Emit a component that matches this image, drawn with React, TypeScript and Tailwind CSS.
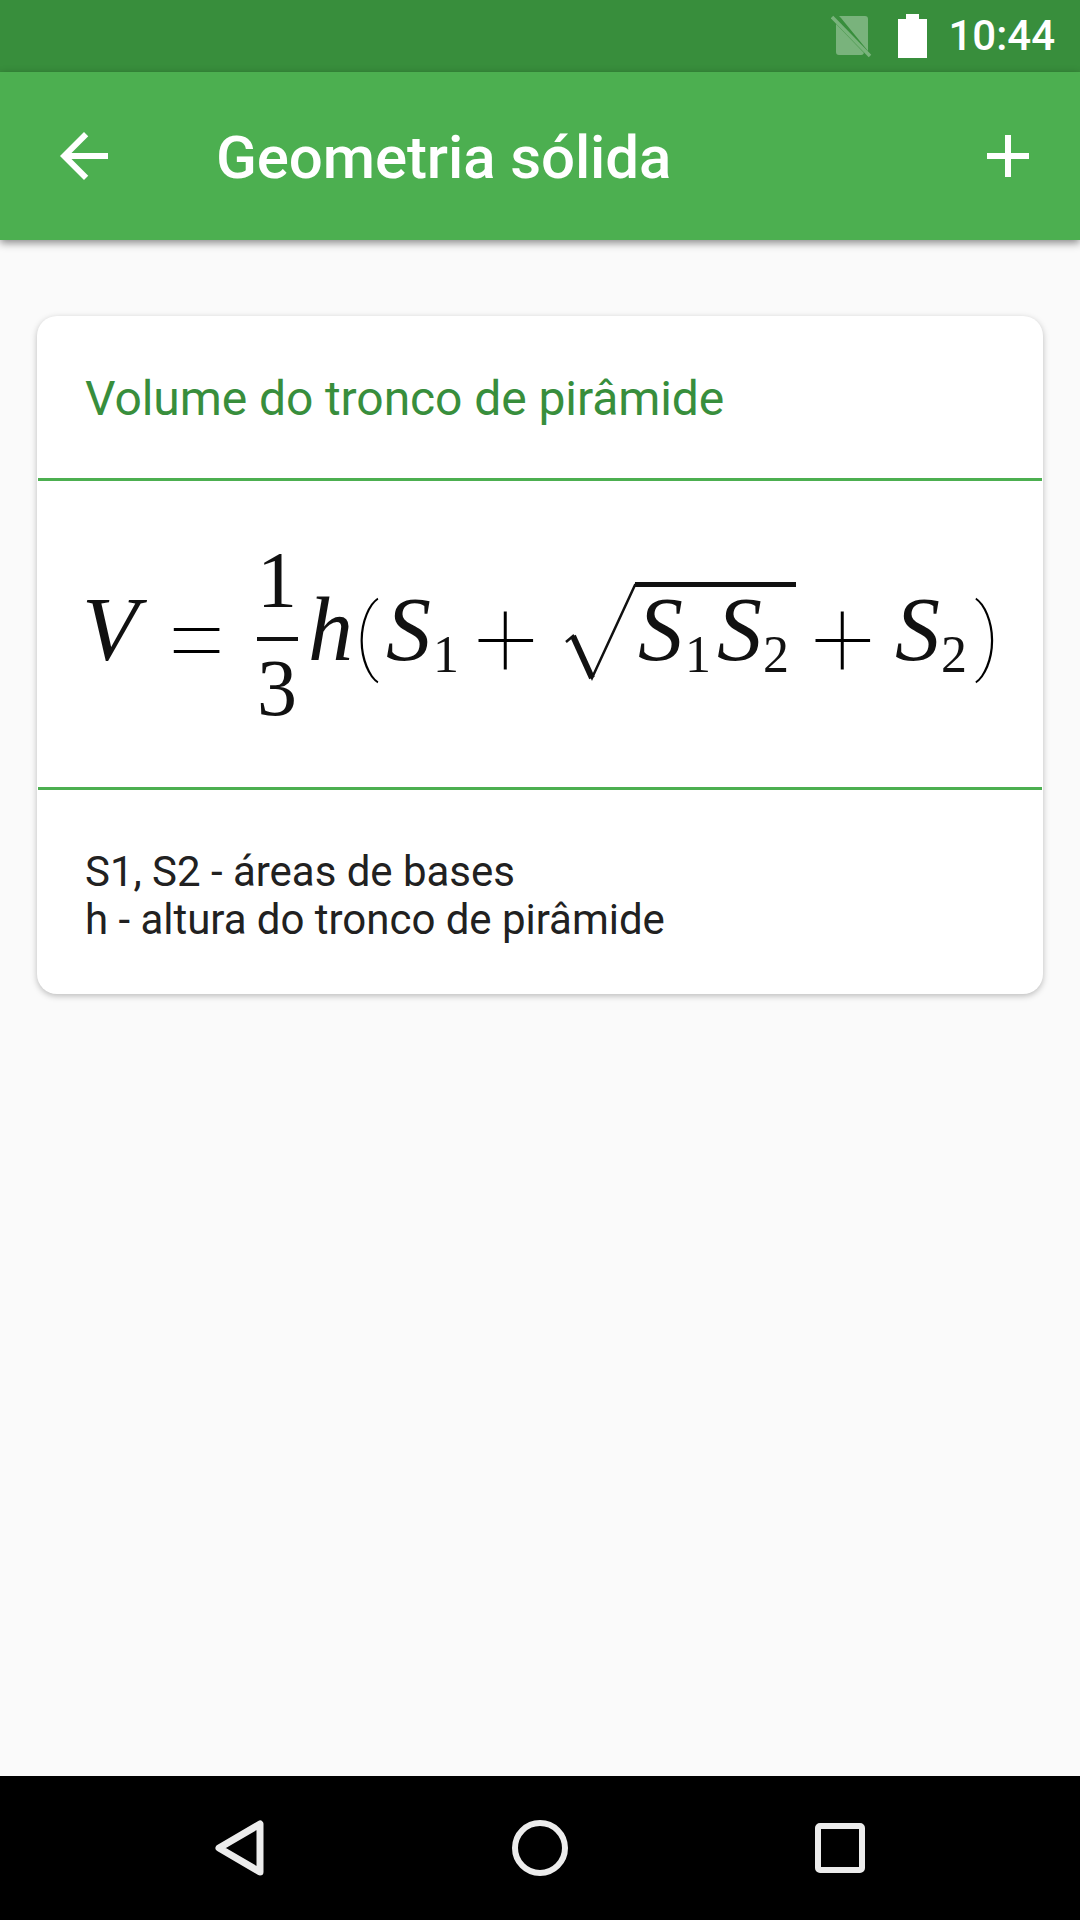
import React from "react";

const roboto = { fontFamily: "Roboto, sans-serif" };

function Formula() {
  const serif = { fontFamily: '"Liberation Serif", serif', fill: "#111" } as const;
  const thin = { fontFamily: "Roboto, sans-serif", fontWeight: 100, fill: "#000" } as const;
  return (
    <svg width="1006" height="306" viewBox="37 481 1006 306" className="block blur-[0.4px]" aria-label="formula">
      <g style={serif}>
        <text x="82" y="660" fontSize="92" fontStyle="italic">V</text>
        <text x="257" y="607" fontSize="80">1</text>
        <rect x="257" y="637" width="41" height="4" fill="#111" />
        <text x="257" y="715" fontSize="80">3</text>
        <text x="308" y="660" fontSize="90" fontStyle="italic">h</text>
        <text x="386" y="660" fontSize="90" fontStyle="italic">S</text>
        <text x="433" y="672" fontSize="52">1</text>
        <path d="M566 642 L573 636 L592 678 L635 585 H796" fill="none" stroke="#111" strokeWidth="2.5" />
        <path d="M573 636 L592 678" fill="none" stroke="#111" strokeWidth="6" />
        <rect x="635" y="582" width="161" height="5" fill="#111" />
        <text x="638" y="660" fontSize="90" fontStyle="italic">S</text>
        <text x="685" y="672" fontSize="52">1</text>
        <text x="717" y="660" fontSize="90" fontStyle="italic">S</text>
        <text x="763" y="672" fontSize="52">2</text>
        <text x="895" y="660" fontSize="90" fontStyle="italic">S</text>
        <text x="941" y="672" fontSize="52">2</text>
      </g>
      <g style={thin} textAnchor="middle">
        <text x="197" y="677" fontSize="112">=</text>
        <text x="506" y="677" fontSize="112">+</text>
        <text x="843" y="677" fontSize="112">+</text>
        <text x="367" y="664" fontSize="84">(</text>
        <text x="987" y="664" fontSize="84">)</text>
      </g>
    </svg>
  );
}

export default function App() {
  return (
    <div className="w-[1080px] h-[1920px] flex flex-col bg-[#fafafa] overflow-hidden" style={roboto}>
      <div className="h-[72px] shrink-0 bg-[#388e3c] flex items-center justify-end pr-[25px]">
        <svg width="42" height="44" viewBox="0 0 42 44" className="mr-[25px] mt-[2px]">
          <path d="M8 1h26a3 3 0 0 1 3 3v32L10 3z M5 9 33 38a3 3 0 0 1-3 2H8a3 3 0 0 1-3-3z" fill="#fff" fillOpacity="0.33" />
          <path d="M1 2 39 41" stroke="#fff" strokeOpacity="0.33" strokeWidth="3.5" />
        </svg>
        <svg width="29" height="44" viewBox="0 0 29 44" className="mr-[21px]">
          <path d="M8 0h13v5h8v39H0V5h8z" fill="#fff" />
        </svg>
        <span className="text-[42px] leading-none font-medium text-white">10:44</span>
      </div>

      <div className="h-[168px] shrink-0 bg-[#4caf50] relative z-10 flex items-center pl-[48px] pr-[36px] shadow-[0_3px_8px_rgba(0,0,0,0.45)]">
        <svg width="72" height="72" viewBox="0 0 24 24" fill="#fff">
          <path d="M20 11H7.83l5.59-5.59L12 4l-8 8 8 8 1.41-1.41L7.83 13H20v-2z" />
        </svg>
        <span className="ml-[96px] mt-[4px] flex-1 text-[60px] leading-none font-medium text-white tracking-[-0.1px]">Geometria sólida</span>
        <svg width="72" height="72" viewBox="0 0 24 24" fill="#fff">
          <path d="M19 13h-6v6h-2v-6H5v-2h6V5h2v6h6v2z" />
        </svg>
      </div>

      <div className="flex-1 pt-[76px] px-[37px]">
        <div className="h-[678px] bg-white rounded-[20px] flex flex-col shadow-[0_2px_6px_rgba(0,0,0,0.25)]">
          <div className="h-[162px] shrink-0 flex items-center px-[48px] pt-[3px]">
            <span className="text-[48px] leading-none text-[#388e3c] tracking-[-0.08px]">Volume do tronco de pirâmide</span>
          </div>
          <div className="h-[3px] shrink-0 mx-[1px] bg-[#4caf50]" />
          <div className="h-[306px] shrink-0"><Formula /></div>
          <div className="h-[3px] shrink-0 mx-[1px] bg-[#4caf50]" />
          <div className="pt-[58px] px-[48px] text-[42px] leading-[48px] text-[#212121] tracking-[-0.03px]">
            <div>S1, S2 - áreas de bases</div>
            <div>h - altura do tronco de pirâmide</div>
          </div>
        </div>
      </div>

      <div className="h-[144px] shrink-0 bg-black relative">
        <svg width="1080" height="144" viewBox="0 1776 1080 144" className="block">
          <path d="M260 1824 V1872 L219 1848 Z" fill="none" stroke="#ececec" strokeWidth="7" strokeLinejoin="round" />
          <circle cx="540" cy="1848" r="25" fill="none" stroke="#ececec" strokeWidth="6" />
          <rect x="818" y="1826" width="44" height="44" rx="2" fill="none" stroke="#ececec" strokeWidth="6" />
        </svg>
      </div>
    </div>
  );
}
